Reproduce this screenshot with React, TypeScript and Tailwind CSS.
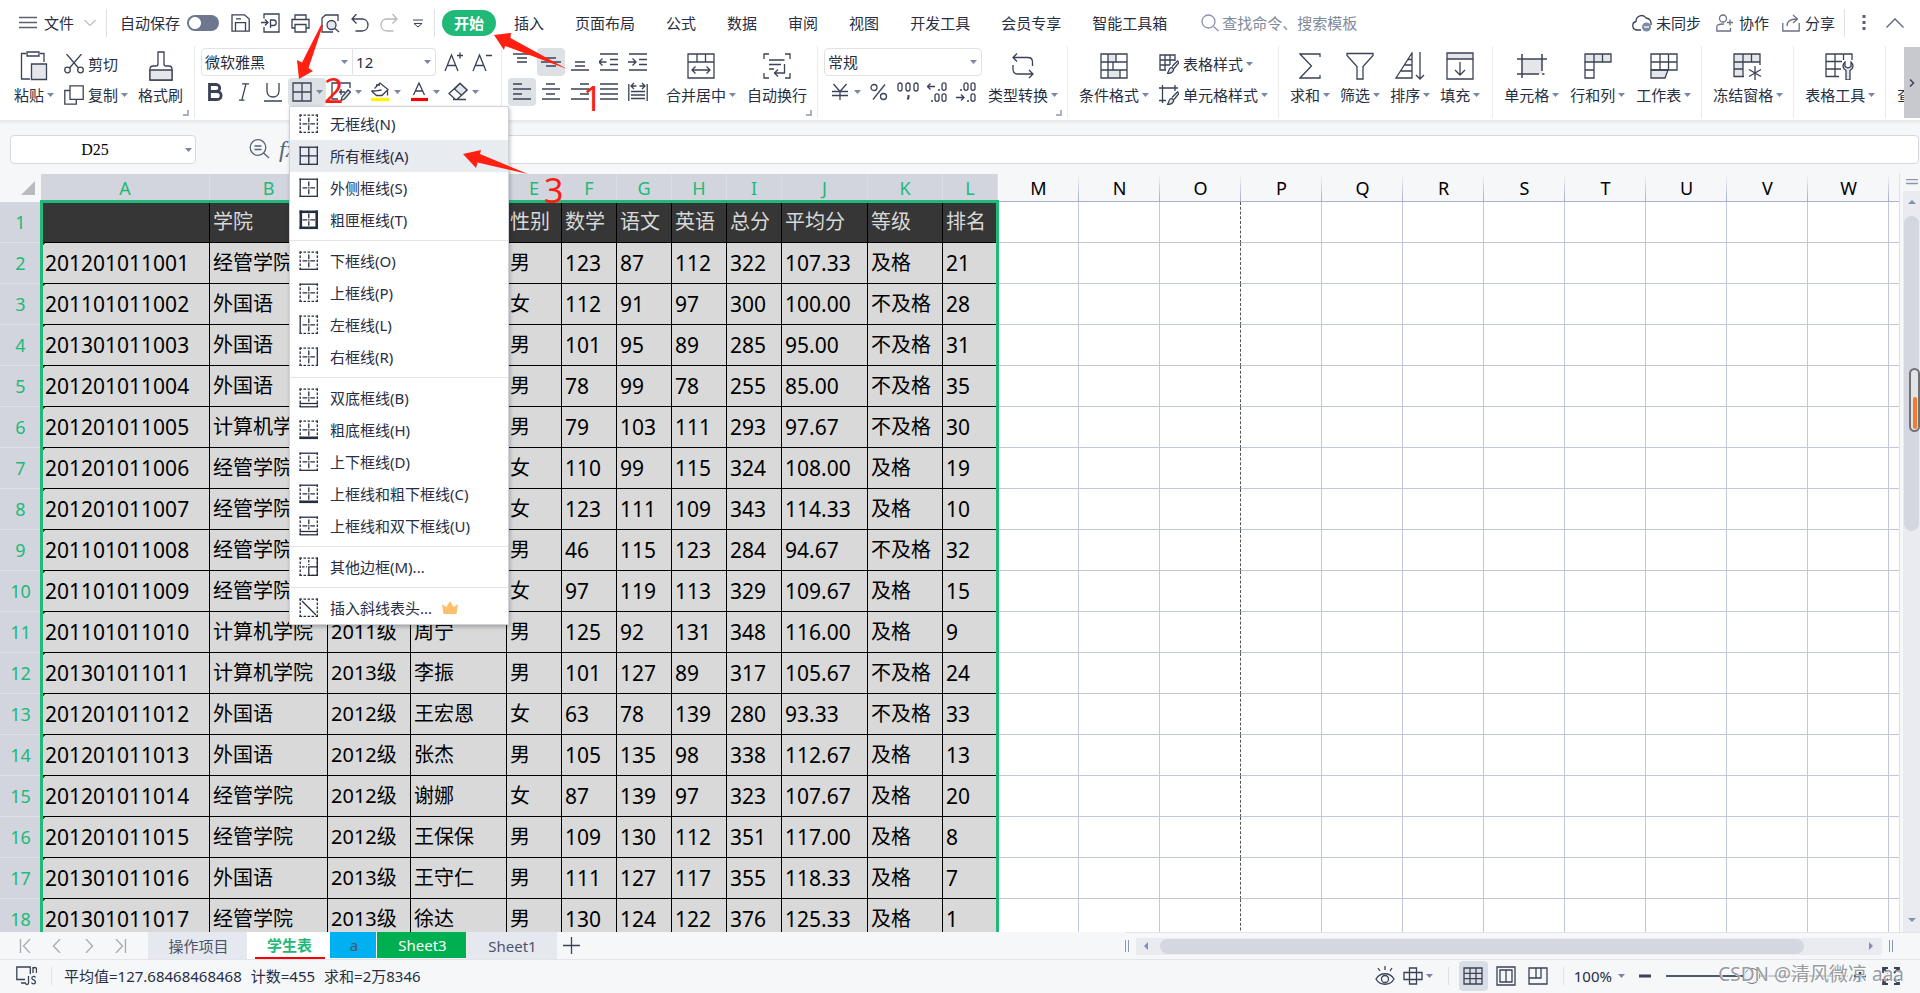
import type { ReactNode } from "react";

const INK = "#3a4256";

function Svg({ w, h, className = "", children }: { w: number; h: number; className?: string; children: ReactNode }) {
  return (
    <svg width={w} height={h} viewBox={`0 0 ${w} ${h}`} fill="none" stroke={INK} strokeWidth="1.3" className={`shrink-0 ${className}`} aria-hidden="true">
      {children}
    </svg>
  );
}

function Caret() {
  return (
    <svg width="7" height="4" viewBox="0 0 7 4" className="shrink-0" aria-hidden="true">
      <path d="M0 0h7L3.500 4z" fill="#7b86a3" />
    </svg>
  );
}

function Big({ label, icon, caret = true }: { label: string; icon: ReactNode; caret?: boolean }) {
  return (
    <button className="flex shrink-0 flex-col items-center">
      <span className="flex h-8 items-center">{icon}</span>
      <span className="flex h-[26px] items-center gap-[3px] whitespace-nowrap">
        {label}
        {caret && <Caret />}
      </span>
    </button>
  );
}

function Small({ label, icon, caret = true }: { label: string; icon: ReactNode; caret?: boolean }) {
  return (
    <button className="flex h-7 items-center gap-1 whitespace-nowrap">
      {icon}
      <span className="flex items-center gap-[3px]">
        {label}
        {caret && <Caret />}
      </span>
    </button>
  );
}

function Tool({ label, active = false, drop = false, children }: { label: string; active?: boolean; drop?: boolean; children: ReactNode }) {
  return (
    <button
      aria-label={label}
      className={`flex h-7 shrink-0 items-center rounded-sm ${drop ? "w-[38px] gap-1 pl-1" : "w-7 justify-center"} ${active ? "bg-[#dce1e6]" : ""}`}
    >
      {children}
      {drop && <Caret />}
    </button>
  );
}

function Group({ corner = false, className = "", children }: { corner?: boolean; className?: string; children: ReactNode }) {
  return (
    <div className={`relative flex h-[72px] shrink-0 border-r border-[#e9ebef] pt-1 ${className}`}>
      {children}
      {corner && (
        <svg width="6" height="6" viewBox="0 0 6 6" className="absolute right-[5px] bottom-0.5" aria-hidden="true">
          <path d="M5 0v5H0" fill="none" stroke="#a9b1c4" strokeWidth="2" />
        </svg>
      )}
    </div>
  );
}

function Pick({ label, value, className }: { label: string; value: string; className: string }) {
  return (
    <div className={`relative flex items-center border-[#dfe2e8] ${className}`}>
      <select aria-label={label} className="h-full w-full appearance-none bg-transparent pl-[3px] outline-none">
        <option>{value}</option>
      </select>
      <span className="pointer-events-none absolute right-1 flex">
        <Caret />
      </span>
    </div>
  );
}

function Lines({ rows }: { rows: [number, number, number][] }) {
  return (
    <Svg w={20} h={20}>
      <path d={rows.map(([x, y, n]) => `M${x} ${y}h${n}`).join("")} strokeWidth="1.6" />
    </Svg>
  );
}

/* ---------- title bar ---------- */

const tabs = ["插入", "页面布局", "公式", "数据", "审阅", "视图", "开发工具", "会员专享", "智能工具箱"];

function TitleBar() {
  return (
    <header className="flex h-[46px] shrink-0 items-center bg-white whitespace-nowrap">
      <button className="ml-[19px] flex items-center">
        <Svg w={18} h={14}>
          <path d="M0 1.500h18M0 6.500h18M0 11.500h18" stroke="#5b6170" />
        </Svg>
        <span className="ml-[7px]">文件</span>
        <Svg w={12} h={8} className="ml-[10px]">
          <path d="M.5 1L6 6.500 11.500 1" stroke="#8a8f9b" strokeWidth="1" />
        </Svg>
      </button>
      <span className="mr-[13px] ml-[10px] h-7 w-px bg-[#dfe1e6]" />
      <label htmlFor="autosave">自动保存</label>
      <input
        id="autosave"
        type="checkbox"
        className="ml-[7px] h-4 w-8 appearance-none rounded-full bg-[#6d7790] bg-[radial-gradient(circle_at_8px_8px,#fff_5.5px,transparent_6.5px)]"
      />
      <div className="ml-3 flex items-center gap-[11px]">
        <button aria-label="保存">
          <Svg w={19} h={18}>
            <path d="M1 .8h12.500L18.200 5v12.200H1zM4.500 17V8.700h10V17M5 4.800H10" />
          </Svg>
        </button>
        <button aria-label="输出为PDF">
          <Svg w={19} h={20}>
            <path d="M3 5.500V1h15v18H3v-5M0 9.500h6.500M4 6.500l3 3-3 3M9.500 15V7h3c3.600 0 3.600 5.500 0 5.500H9.500" />
          </Svg>
        </button>
        <button aria-label="打印">
          <Svg w={19} h={19}>
            <path d="M4 5.500V1h11v4.500M4 14H1V5.500h17V14h-3M4 10.500h11V18H4z" />
          </Svg>
        </button>
        <button aria-label="打印预览">
          <Svg w={19} h={19}>
            <path d="M12 18H1V4l3.500-3H17v6" />
            <circle cx="10.500" cy="11" r="4.500" fill="#e4e6ea" />
            <path d="M14 14.500l4 3.500" />
          </Svg>
        </button>
        <button aria-label="撤销">
          <Svg w={18} h={18}>
            <path d="M5.500 0L1 5 5.500 9.500M1.500 5h9.500c8 0 8 12 0 12H4.500" />
          </Svg>
        </button>
        <button aria-label="恢复">
          <Svg w={18} h={18}>
            <path d="M12.500 0L17 5 12.500 9.500M16.500 5H7c-8 0-8 12 0 12h6.500" stroke="#b5b8be" />
          </Svg>
        </button>
        <button aria-label="更多快捷工具" className="ml-1">
          <Svg w={10} h={9}>
            <path d="M0 1h10M1 4.500h8L5 8z" strokeWidth="1" />
          </Svg>
        </button>
      </div>
      <span className="ml-[11px] h-7 w-px bg-[#dfe1e6]" />
      <nav className="ml-[7px] flex items-center">
        <button className="h-[26px] w-[54px] rounded-full bg-[#21b978] font-bold text-white">开始</button>
        <div className="ml-[18px] flex items-center gap-[31px]">
          {tabs.map((t) => (
            <button key={t}>{t}</button>
          ))}
        </div>
      </nav>
      <label className="ml-[34px] flex items-center gap-[3px]">
        <Svg w={18} h={18}>
          <circle cx="7.500" cy="7.500" r="6.500" stroke="#8a93ab" />
          <path d="M12.500 12.500l5 4.500" stroke="#8a93ab" />
        </Svg>
        <input aria-label="搜索" placeholder="查找命令、搜索模板" className="w-40 bg-transparent outline-none placeholder:text-[#7f889d]" />
      </label>
      <div className="ml-auto flex items-center">
        <button className="flex items-center gap-1">
          <Svg w={20} h={18}>
            <path d="M9 16H5.500C-.5 16-.5 8.500 4 7.500 4 1.500 11-.5 14 4c4 .5 5.500 3.500 5 7" />
            <circle cx="14.500" cy="13" r="4.500" fill="#7d8aa8" stroke="none" />
            <path d="M12 13h5" stroke="#fff" />
          </Svg>
          未同步
        </button>
        <button className="ml-[15px] flex items-center gap-1.5">
          <Svg w={17} h={18}>
            <circle cx="7" cy="4.500" r="3.500" stroke="#6a7285" />
            <path d="M14.500 14v3H.8v-3.500c0-3 2-3.500 7.200-3.500M14 5.500v6M11 8.500h6" stroke="#6a7285" />
          </Svg>
          协作
        </button>
        <button className="ml-[13px] flex items-center gap-[5px]">
          <Svg w={18} h={18}>
            <path d="M.8 9v8h16.400V9M5 12c0-4.500 3-7 9.500-7M11 1l4.500 4L11 9" stroke="#6a7285" />
          </Svg>
          分享
        </button>
        <span className="ml-[9px] h-7 w-px bg-[#dfe1e6]" />
        <button aria-label="更多" className="ml-[17px]">
          <Svg w={4} h={16}>
            <path d="M.5 1.500h3M.5 7.500h3M.5 13.500h3" strokeWidth="3" stroke="#5b6170" />
          </Svg>
        </button>
        <button aria-label="收起功能区" className="mr-4 ml-5">
          <Svg w={18} h={10}>
            <path d="M.5 9.500L9 1l8.500 8.500" stroke="#5b6170" />
          </Svg>
        </button>
      </div>
    </header>
  );
}

/* ---------- ribbon ---------- */

const brush = (
  <>
    <path d="M13 12.500l5.500-5.500 1.500 1.500-5 6" />
    <path d="M8 19.300c2 0 1-4 3.500-5.500 2-.5 3.500 1 3 2.500-.8 2.500-4 3.500-6.500 3z" fill="#e4e6ea" />
  </>
);

function Ribbon() {
  return (
    <section className="flex h-[74px] shrink-0 overflow-hidden bg-white">
      <div className="flex min-w-0 flex-1 overflow-hidden">
        <Group corner className="gap-[10px] pr-[11px] pl-[14px]">
          <Big
            label="粘贴"
            icon={
              <Svg w={28} h={30}>
                <path d="M6 2.500H1.500V28H10M20 2.500h4V11M7 1h12v4H7z" />
                <path d="M11.500 13h15v15.500h-15z" fill="#e4e6ea" />
              </Svg>
            }
          />
          <div className="flex flex-col gap-[3px]">
            <Small
              label="剪切"
              caret={false}
              icon={
                <Svg w={20} h={20}>
                  <path d="M2.500 0L14.500 14M17.500 0L5.500 14" />
                  <circle cx="3.500" cy="16" r="2.800" />
                  <circle cx="16.500" cy="16" r="2.800" />
                </Svg>
              }
            />
            <Small
              label="复制"
              icon={
                <Svg w={20} h={20}>
                  <path d="M6 5.500H.8v13.700h11.500V14.500M6 .8h13.200v13.500H6z" />
                </Svg>
              }
            />
          </div>
          <Big
            label="格式刷"
            caret={false}
            icon={
              <Svg w={24} h={30}>
                <path d="M1 29V18.500c0-2.500 1-3.500 3-3.500h3c1.500 0 2-1 2-2V1h6v12c0 1 .5 2 2 2h3c2 0 3 1 3 3.500V29z" />
                <path d="M1 19h22v10H1z" fill="#e4e6ea" />
              </Svg>
            }
          />
        </Group>

        <Group className="w-[307px] pl-1.5">
          <div className="-mt-0.5 flex flex-col gap-0.5">
            <div className="flex h-7 items-center">
              <Pick label="字体" value="微软雅黑" className="h-7 w-[152px] rounded-l-sm border" />
              <Pick label="字号" value="12" className="h-7 w-[83px] rounded-r-sm border border-l-0" />
              <div className="ml-1 flex">
                <Tool label="增大字号">
                  <Svg w={20} h={20}>
                    <path d="M1 19L7.500 3 14 19M3.500 13.500h8M13 3.500h6M16 .5v6" />
                  </Svg>
                </Tool>
                <Tool label="减小字号">
                  <Svg w={20} h={20}>
                    <path d="M1 19L7.500 3 14 19M3.500 13.500h8M14 3.500h6" />
                  </Svg>
                </Tool>
              </div>
            </div>
            <div className="flex gap-px">
              <Tool label="加粗">
                <Svg w={16} h={18}>
                  <path d="M2.500 1.500H9c5 0 5 7 0 7H2.500zM2.500 8.500H10c5.500 0 5.500 8 0 8H2.500z" strokeWidth="2.800" />
                </Svg>
              </Tool>
              <Tool label="倾斜">
                <Svg w={12} h={18}>
                  <path d="M4 .8h7M1 17.200h5.500M8 .8L3.800 17.200" />
                </Svg>
              </Tool>
              <Tool label="下划线">
                <Svg w={18} h={19}>
                  <path d="M3 0v8c0 8 12 8 12 0V0M0 18h18" />
                </Svg>
              </Tool>
              <Tool label="边框" active drop>
                <Svg w={20} h={20}>
                  <path d="M1 1h18v18H1zM1 10h18M10 1v18" />
                </Svg>
              </Tool>
              <Tool label="绘图边框" drop>
                <Svg w={20} h={20}>
                  <path d="M7 17H1V1h18v5M8 10h6M10 7v6" />
                  <path d="M10 18.500l1-3.500 6-7 2.500 2-6 7z" fill="#e4e6ea" />
                </Svg>
              </Tool>
              <Tool label="填充颜色" drop>
                <Svg w={20} h={20}>
                  <path d="M4.500 6.500L10 1l8 6.500L12 13.500H6.500L1.500 9M1.500 8.500c4 1.500 6-.5 10-.5M6 3h4" />
                  <path d="M17.500 8.500v5" />
                  <path d="M1 17.500h18" stroke="#fff500" strokeWidth="3.400" />
                </Svg>
              </Tool>
              <Tool label="字体颜色" drop>
                <Svg w={20} h={20}>
                  <path d="M4.500 13L10 1l5.500 12M6.500 9h7" />
                  <path d="M2 17.500h17" stroke="#f60000" strokeWidth="3.200" />
                </Svg>
              </Tool>
              <Tool label="清除" drop>
                <Svg w={20} h={20}>
                  <path d="M5 17.500h13M7.500 17.500L1 11.500 12 1.500l7 6.500L9 17.500z" />
                  <path d="M6.500 7L12 1.500l7 6.500-5.500 5.200z" fill="#e4e6ea" />
                </Svg>
              </Tool>
            </div>
          </div>
        </Group>

        <Group corner className="w-[316px] pl-1.5">
          <div className="-mt-0.5 flex flex-col gap-0.5">
            <div className="flex gap-px">
              <Tool label="顶端对齐"><Lines rows={[[1, 2, 18], [5, 6, 10], [5, 10, 10]]} /></Tool>
              <Tool label="垂直居中" active><Lines rows={[[5, 6, 10], [0, 10, 20], [5, 14, 10]]} /></Tool>
              <Tool label="底端对齐"><Lines rows={[[5, 10, 10], [5, 14, 10], [1, 18, 18]]} /></Tool>
              <Tool label="减少缩进量">
                <Svg w={20} h={20}>
                  <path d="M1 2h18M11 7.500h8M11 12.500h8M1 18h18M0 10h7.500M3.500 6.500L0 10l3.500 3.500" />
                </Svg>
              </Tool>
              <Tool label="增加缩进量">
                <Svg w={20} h={20}>
                  <path d="M1 2h18M11 7.500h8M11 12.500h8M1 18h18M0 10h7.500M4.500 6.500L8 10l-3.500 3.500" />
                </Svg>
              </Tool>
            </div>
            <div className="flex gap-px">
              <Tool label="左对齐" active><Lines rows={[[1, 2, 9], [1, 7, 18], [1, 12, 9], [1, 17, 18]]} /></Tool>
              <Tool label="水平居中"><Lines rows={[[5, 2, 9], [1, 7, 18], [5, 12, 9], [1, 17, 18]]} /></Tool>
              <Tool label="右对齐"><Lines rows={[[10, 2, 9], [1, 7, 18], [10, 12, 9], [1, 17, 18]]} /></Tool>
              <Tool label="两端对齐"><Lines rows={[[1, 2, 18], [1, 7, 18], [1, 12, 18], [1, 17, 18]]} /></Tool>
              <Tool label="分散对齐">
                <Svg w={20} h={20}>
                  <path d="M.8 2v17M19.200 2v17M3 9.500h14M3 13h14M3 16.500h14M3.500 4h5M11.500 4h5M6 1L3 4l3 3M14 1l3 3-3 3" />
                </Svg>
              </Tool>
            </div>
          </div>
          <div className="ml-[14px] flex gap-[11px]">
            <Big
              label="合并居中"
              icon={
                <Svg w={28} h={26}>
                  <path d="M1 1h26v24H1zM1 9h26M10 1v8M18.500 1v8M5 17h18M8.500 13.500L5 17l3.500 3.500M19.500 13.500L23 17l-3.500 3.500" />
                </Svg>
              }
            />
            <Big
              label="自动换行"
              caret={false}
              icon={
                <Svg w={28} h={26}>
                  <path d="M6 1H1v5M22 1h5v5M6 25H1v-5M22 25h5v-5M6 7h15.500M6 11.500h12M6 16h5M21.500 11v9H11M15 16.500L11.500 20l3.500 3.500" />
                </Svg>
              }
            />
          </div>
        </Group>

        <Group corner className="gap-1.5 pr-[9px] pl-1.5">
          <div className="-mt-0.5 flex flex-col gap-0.5">
            <Pick label="数字格式" value="常规" className="h-7 w-[158px] rounded-sm border" />
            <div className="flex gap-px pl-0.5">
              <Tool label="中文货币符号" drop>
                <Svg w={20} h={20}>
                  <path d="M3.500 2L10 9.500 16.500 2M10 9.500V18M2 9.500h16M2 13.500h16" />
                </Svg>
              </Tool>
              <Tool label="百分比样式">
                <Svg w={18} h={18}>
                  <circle cx="4" cy="4.500" r="3" />
                  <circle cx="13.500" cy="13.500" r="3" />
                  <path d="M15 1.500L3 16.500" />
                </Svg>
              </Tool>
              <Tool label="千位分隔样式">
                <Svg w={22} h={20}>
                  <rect x="1" y="1" width="4" height="8" rx="2" />
                  <rect x="9" y="1" width="4" height="8" rx="2" />
                  <rect x="17" y="1" width="4" height="8" rx="2" />
                  <path d="M11.500 13v2.500l-1 2" strokeWidth="2" />
                </Svg>
              </Tool>
              <Tool label="增加小数位数">
                <Svg w={20} h={20}>
                  <rect x="15" y="0.800" width="4" height="7.500" rx="2" />
                  <rect x="8" y="11.800" width="4" height="7.500" rx="2" />
                  <rect x="15" y="11.800" width="4" height="7.500" rx="2" />
                  <path d="M.5 4.500H8M3.500 1.500l-3 3 3 3M11 8h2M4 19h2" />
                </Svg>
              </Tool>
              <Tool label="减少小数位数">
                <Svg w={20} h={20}>
                  <rect x="8" y="0.800" width="4" height="7.500" rx="2" />
                  <rect x="15" y="0.800" width="4" height="7.500" rx="2" />
                  <rect x="15" y="11.800" width="4" height="7.500" rx="2" />
                  <path d="M0 15.500h8M5 12.500l3 3-3 3M4 8h2M11 19h2" />
                </Svg>
              </Tool>
            </div>
          </div>
          <Big
            label="类型转换"
            icon={
              <Svg w={24} h={26}>
                <path d="M6 .5L2 4.500l4 4M2.500 4.500H17c3 0 4.500 1.500 4.500 4.500v4M2 12v4c0 3 1.500 5 4.500 5H22M18 17l4 4-4 4" />
              </Svg>
            }
          />
        </Group>

        <Group className="gap-[10px] pr-[10px] pl-[11px]">
          <Big
            label="条件格式"
            icon={
              <Svg w={28} h={26}>
                <path d="M8 1h8v8H8zM8 17h12v8H8z" fill="#e4e6ea" stroke="none" />
                <path d="M1 1h26v24H1zM1 9h26M1 17h26M8 1v24M16 1v8M13 9v8M20 17v8" />
              </Svg>
            }
          />
          <div className="flex flex-col gap-[3px]">
            <Small
              label="表格样式"
              icon={
                <Svg w={20} h={20}>
                  <path d="M7 16H1V1h15v6M1 6h15M1 11h10M6 1v15M11 1v10" />
                  {brush}
                </Svg>
              }
            />
            <Small
              label="单元格样式"
              icon={
                <Svg w={20} h={20}>
                  <path d="M0 3h19M3.500 0v18M0 15.500h7M16 0v6" />
                  {brush}
                </Svg>
              }
            />
          </div>
        </Group>

        <Group className="gap-[10px] pr-3 pl-[11px]">
          <Big
            label="求和"
            icon={
              <Svg w={22} h={26}>
                <path d="M21 4V1H1l11.500 12L1 25h20v-3" />
              </Svg>
            }
          />
          <Big
            label="筛选"
            icon={
              <Svg w={28} h={28}>
                <path d="M1 1.500h26v2l-10 11V27h-6V14.500L1 3.500z" />
              </Svg>
            }
          />
          <Big
            label="排序"
            icon={
              <Svg w={30} h={28}>
                <path d="M1 26L17 1v25zM13 7.500h4M9.500 13h7.500M5.500 19h11.500M25 0v27M21 23l4 4 4-4" />
              </Svg>
            }
          />
          <Big
            label="填充"
            icon={
              <Svg w={28} h={28}>
                <path d="M1 1h26v6H1z" fill="#e4e6ea" />
                <path d="M1 7v20h26V7M14 10v13M9 18l5 5 5-5" />
              </Svg>
            }
          />
        </Group>

        <Group className="gap-[11px] pr-[10px] pl-[11px]">
          <Big
            label="单元格"
            icon={
              <Svg w={30} h={24}>
                <path d="M5 5h20v15H5z" fill="#e4e6ea" stroke="none" />
                <path d="M0 5h30M5 0v24M25 0v17M0 20h22M25 20h2.500" strokeWidth="1.500" />
              </Svg>
            }
          />
          <Big
            label="行和列"
            icon={
              <Svg w={28} h={26}>
                <path d="M1 1h26v8H1z" fill="#e4e6ea" />
                <path d="M1 9v16h9V1M18.500 1v8M1 17h9" />
              </Svg>
            }
          />
          <Big
            label="工作表"
            icon={
              <Svg w={28} h={26}>
                <path d="M1 17h17l-3 8H1z" fill="#e4e6ea" />
                <path d="M1 17V1h26v16H1M1 9h26M10 1v16M18.500 1v16" />
              </Svg>
            }
          />
        </Group>

        <Group className="pr-[10px] pl-[11px]">
          <Big
            label="冻结窗格"
            icon={
              <Svg w={30} h={28}>
                <path d="M1 2h26v8H10v15H1z" fill="#e4e6ea" stroke="none" />
                <path d="M11 24.500H1V2h26v11M1 10h26M1 17h9M10 2v22.500M18.500 2v8M22 14v14M16 17.500l12 7M28 17.500l-12 7" />
              </Svg>
            }
          />
        </Group>
        <Group className="pr-[10px] pl-[11px]">
          <Big
            label="表格工具"
            icon={
              <Svg w={30} h={28}>
                <path d="M14 24.500H1V2h26v6M1 9.500h16M1 17h15M10 2v22.500M18.500 2v6" />
                <path d="M20 10c-3 3-2.500 6.500 1 8.500V28h4v-9.500c3.500-2 4-5.500 1-8.500v4.500l-3 1.500-3-1.500z" fill="#e4e6ea" />
              </Svg>
            }
          />
        </Group>
        <div className="flex shrink-0 pt-1 pl-[11px]">
          <Big label="查找" icon={null} />
        </div>
      </div>
      <button aria-label="向右滚动" className="mt-px flex h-[71px] w-4 shrink-0 items-center justify-center bg-[#c7c9cf]">
        <Svg w={6} h={8}>
          <path d="M1 .5L4.500 4 1 7.500" strokeWidth="1.500" />
        </Svg>
      </button>
    </section>
  );
}

/* ---------- formula bar ---------- */

function FormulaBar() {
  return (
    <section className="flex h-[54px] shrink-0 items-start bg-[linear-gradient(#e6e7e9,#f5f7f9_5px)] pt-[15px] pr-px pl-[10px]">
      <div className="relative flex h-[29px] w-[186px] items-center rounded-sm border border-[#d5d8df] bg-white">
        <input aria-label="名称框" defaultValue="D25" className="w-[168px] bg-transparent text-center font-[Liberation_Serif,serif] text-base text-black outline-none" />
        <span className="absolute right-[3px]">
          <Caret />
        </span>
      </div>
      <div className="ml-[53px] flex h-7 w-[75px] items-center gap-[9px]">
        <Svg w={21} h={20}>
          <circle cx="9" cy="8.500" r="7.800" stroke="#59627a" />
          <path d="M5.500 7h7M5.500 10.500h7M14.500 14l5.500 5" stroke="#59627a" />
        </Svg>
        <button className="font-[Liberation_Serif,serif] text-2xl leading-5 text-[#59627a] italic">fx</button>
      </div>
      <input aria-label="编辑栏" className="h-[29px] min-w-0 flex-1 rounded-sm border border-[#d5d8df] bg-white px-2 outline-none" />
    </section>
  );
}

/* ---------- sheet ---------- */

const columns: [string, string][] = [
  ["A", "w-[169px]"], ["B", "w-[118px]"], ["C", "w-[83px]"], ["D", "w-[96px]"], ["E", "w-[55px]"], ["F", "w-[55px]"],
  ["G", "w-[55px]"], ["H", "w-[55px]"], ["I", "w-[55px]"], ["J", "w-[86px]"], ["K", "w-[75px]"], ["L", "w-[55px]"],
];
const blanks = ["M", "N", "O", "P", "Q", "R", "S", "T", "U", "V", "W"];

const rows: string[][] = [
  ["", "学院", "", "", "性别", "数学", "语文", "英语", "总分", "平均分", "等级", "排名"],
  ["201201011001", "经管学院", "", "", "男", "123", "87", "112", "322", "107.33", "及格", "21"],
  ["201101011002", "外国语", "", "", "女", "112", "91", "97", "300", "100.00", "不及格", "28"],
  ["201301011003", "外国语", "", "", "男", "101", "95", "89", "285", "95.00", "不及格", "31"],
  ["201201011004", "外国语", "", "", "男", "78", "99", "78", "255", "85.00", "不及格", "35"],
  ["201201011005", "计算机学院", "", "", "男", "79", "103", "111", "293", "97.67", "不及格", "30"],
  ["201201011006", "经管学院", "", "", "女", "110", "99", "115", "324", "108.00", "及格", "19"],
  ["201201011007", "经管学院", "", "", "女", "123", "111", "109", "343", "114.33", "及格", "10"],
  ["201101011008", "经管学院", "", "", "男", "46", "115", "123", "284", "94.67", "不及格", "32"],
  ["201101011009", "经管学院", "", "", "女", "97", "119", "113", "329", "109.67", "及格", "15"],
  ["201101011010", "计算机学院", "2011级", "周宁", "男", "125", "92", "131", "348", "116.00", "及格", "9"],
  ["201301011011", "计算机学院", "2013级", "李振", "男", "101", "127", "89", "317", "105.67", "不及格", "24"],
  ["201201011012", "外国语", "2012级", "王宏恩", "女", "63", "78", "139", "280", "93.33", "不及格", "33"],
  ["201201011013", "外国语", "2012级", "张杰", "男", "105", "135", "98", "338", "112.67", "及格", "13"],
  ["201201011014", "经管学院", "2012级", "谢娜", "女", "87", "139", "97", "323", "107.67", "及格", "20"],
  ["201201011015", "经管学院", "2012级", "王保保", "男", "109", "130", "112", "351", "117.00", "及格", "8"],
  ["201301011016", "外国语", "2013级", "王守仁", "男", "111", "127", "117", "355", "118.33", "及格", "7"],
  ["201301011017", "经管学院", "2013级", "徐达", "男", "130", "124", "122", "376", "125.33", "及格", "1"],
];

function Sheet() {
  return (
    <main className="flex min-h-0 flex-1">
      <div className="relative min-w-0 flex-1 overflow-hidden bg-white">
        <table className="w-full table-fixed border-separate border-spacing-0 leading-none text-black">
          <colgroup>
            <col className="w-[41px]" />
            {columns.map(([c, w]) => (
              <col key={c} className={w} />
            ))}
            {blanks.map((c) => (
              <col key={c} className="w-[81px]" />
            ))}
            <col />
          </colgroup>
          <thead>
            <tr className="h-7 text-lg leading-none">
              <th className="bg-[#f5f7f9] p-0">
                <svg width="14" height="14" viewBox="0 0 14 14" className="ml-[21px] block" aria-hidden="true">
                  <path d="M14 0v14H0z" fill="#b9bbbf" />
                </svg>
              </th>
              {columns.map(([c]) => (
                <th key={c} scope="col" className="border-r border-b border-r-[#d9dde6] border-b-[#a9b1c9] bg-[#d2d5dd] p-0 font-normal text-[#21b978]">
                  {c}
                </th>
              ))}
              {blanks.map((c) => (
                <th
                  key={c}
                  scope="col"
                  className="border-b border-[#a9b1c9] bg-[#f5f7f9] bg-[linear-gradient(#f5f7f9,#a5aec6)] bg-[size:1px_100%] bg-[position:right_top] bg-no-repeat p-0 font-normal"
                >
                  {c}
                </th>
              ))}
              <th className="border-b border-[#a9b1c9] bg-[#f5f7f9] p-0" />
            </tr>
          </thead>
          <tbody>
            {rows.map((r, i) => (
              <tr key={i} className="h-[41px]">
                <th scope="row" className="border-b border-[#dde0e8] bg-[#d2d5dd] p-0 text-lg leading-none font-normal text-[#21b978]">
                  {i + 1}
                </th>
                {r.map((v, j) => (
                  <td
                    key={j}
                    className={`overflow-hidden border-r border-b border-black p-0 whitespace-nowrap ${j === 0 ? "pl-1" : "pl-[3px]"} ${
                      i === 0 ? "bg-[#363636] text-[#d9d9d9]" : "bg-[#d9d9d9]"
                    } ${/^[\d.]+$/.test(v) ? "text-[21px] leading-none" : "text-xl leading-none"} ${
                      j === 0 && i > 0 ? "bg-[linear-gradient(135deg,#0b7a12_3px,transparent_3px)]" : ""
                    }`}
                  >
                    {v}
                  </td>
                ))}
                {blanks.map((c) => (
                  <td key={c} className={`border-r border-b border-b-[#c0c7da] p-0 ${c === "O" ? "border-r-[#555] border-dashed [border-bottom-style:solid]" : "border-r-[#c0c7da]"}`} />
                ))}
                <td className="border-b border-[#c0c7da] p-0" />
              </tr>
            ))}
          </tbody>
        </table>
        <div className="pointer-events-none absolute top-[26px] left-10 h-[800px] w-[959px] border-3 border-[#21b978]" />
      </div>

      <aside className="relative flex w-[21px] shrink-0 flex-col border-l border-[#dcdfe6] bg-[#f5f7f9] pl-[3px]">
        <div className="flex h-[17px] shrink-0 items-end justify-center pb-1.5">
          <Svg w={12} h={6}>
            <path d="M0 .5h12M0 4.500h12" stroke="#8c97b2" />
          </Svg>
        </div>
        <div className="flex flex-1 flex-col items-center bg-[#e9ebf0]">
          <svg width="8" height="4" viewBox="0 0 8 4" className="mt-[9px] shrink-0" aria-hidden="true">
            <path d="M0 4h8L4 0z" fill="#8390b0" />
          </svg>
          <div className="mt-3 h-[315px] w-[15px] shrink-0 rounded-full bg-[#d4d7df]" />
          <svg width="8" height="4" viewBox="0 0 8 4" className="mt-auto mb-[10px] shrink-0" aria-hidden="true">
            <path d="M0 0h8L4 4z" fill="#8390b0" />
          </svg>
        </div>
        <div className="absolute top-[194px] right-0 flex h-16 w-[11px] items-end justify-center rounded-full border-2 border-[#6f7175] bg-[#e3e4e6] pb-px">
          <div className="h-8 w-1 rounded-full bg-[#f47a2c]" />
        </div>
      </aside>
    </main>
  );
}

/* ---------- border menu ---------- */

type Edge = "solid" | "thick" | "double" | undefined;
type Glyph = { t?: Edge; b?: Edge; l?: Edge; r?: Edge; mid?: "solid" | "corner" | "diag" };

function BorderGlyph({ t, b, l, r, mid }: Glyph) {
  const dash = "2.5 1.500";
  const edge = (e: Edge, d: string) => <path d={d} strokeDasharray={e ? undefined : dash} strokeWidth={e === "thick" ? 2.6 : 1.3} />;
  const low = b === "double" ? 15.5 : b === "thick" ? 17.8 : 18.3;
  return (
    <svg width="20" height="20" viewBox="0 0 20 20" fill="none" stroke="#272e42" strokeWidth="1.300" className="shrink-0" aria-hidden="true">
      {edge(t, t === "thick" ? "M.5 1.800h18.500" : "M.5 1.200h18.500")}
      {edge(b, `M.5 ${low}h18.500`)}
      {b === "double" && <path d="M.5 18.800h18.500" />}
      {edge(l, l === "thick" ? "M1.800 .5v18.500" : "M1.200 .5v18.500")}
      {edge(r, r === "thick" ? "M17.700 .5v18.500" : "M18.300 .5v18.500")}
      {!mid && <path d={`M9.800 3.500V8.300M9.800 11.300V${low - 2}M3.500 9.800H8.300M11.300 9.800H16M9 9.800h1.600`} />}
      {mid === "solid" && <path d="M9.800 1v18M1 9.800h18" />}
      {mid === "corner" && (
        <>
          <path d="M9.800 3v5M3 9.800h5" strokeDasharray={dash} />
          <path d="M9.800 19V9.800H19M9.800 18.300h9M18.300 1v18" />
        </>
      )}
      {mid === "diag" && <path d="M3 3l14 14" />}
    </svg>
  );
}

const menu: { label: string; g: Glyph; active?: boolean; vip?: boolean }[][] = [
  [
    { label: "无框线(N)", g: {} },
    { label: "所有框线(A)", g: { t: "solid", b: "solid", l: "solid", r: "solid", mid: "solid" }, active: true },
    { label: "外侧框线(S)", g: { t: "solid", b: "solid", l: "solid", r: "solid" } },
    { label: "粗匣框线(T)", g: { t: "thick", b: "thick", l: "thick", r: "thick" } },
  ],
  [
    { label: "下框线(O)", g: { b: "solid" } },
    { label: "上框线(P)", g: { t: "solid" } },
    { label: "左框线(L)", g: { l: "solid" } },
    { label: "右框线(R)", g: { r: "solid" } },
  ],
  [
    { label: "双底框线(B)", g: { b: "double" } },
    { label: "粗底框线(H)", g: { b: "thick" } },
    { label: "上下框线(D)", g: { t: "solid", b: "solid" } },
    { label: "上框线和粗下框线(C)", g: { t: "solid", b: "thick" } },
    { label: "上框线和双下框线(U)", g: { t: "solid", b: "double" } },
  ],
  [{ label: "其他边框(M)...", g: { mid: "corner" } }],
  [{ label: "插入斜线表头...", g: { mid: "diag" }, vip: true }],
];

function BorderMenu() {
  return (
    <div role="menu" className="absolute top-[106px] left-[289px] w-[220px] border border-[#cfd2d8] bg-white pt-px shadow-[1px_2px_4px_rgba(0,0,0,0.25)]">
      {menu.map((items, i) => (
        <div key={i} className={i ? "mt-1 border-t border-[#e2e4e8] pt-1" : ""}>
          {items.map(({ label, g, active, vip }) => (
            <button key={label} role="menuitem" className={`flex h-8 w-full items-center pl-[9px] ${active ? "bg-[#e8ebf0]" : ""}`}>
              <BorderGlyph {...g} />
              <span className="ml-[11px]">{label}</span>
              {vip && (
                <svg width="16" height="13" viewBox="0 0 16 13" className="mb-0.5 ml-[10px]" aria-hidden="true">
                  <path d="M0 3l4.500 3L8 0l3.500 6L16 3l-1.500 10h-13z" fill="#fdbf6b" />
                </svg>
              )}
            </button>
          ))}
        </div>
      ))}
    </div>
  );
}

/* ---------- sheet tabs and status bar ---------- */

function SheetTabs() {
  const nav: [string, string][] = [
    ["第一张", "M1.500 0v14M11 0L4.500 7l6.500 7"],
    ["上一张", "M9 0L2.500 7 9 14"],
    ["下一张", "M3 0l6.500 7L3 14"],
    ["最后一张", "M10.500 0v14M1 0l6.500 7L1 14"],
  ];
  return (
    <div className="flex h-[27px] shrink-0 items-stretch bg-[#f5f7f9] text-[#4b5468]">
      <div className="flex w-[148px] items-center gap-5 pl-[19px]">
        {nav.map(([label, d]) => (
          <button key={label} aria-label={label}>
            <Svg w={12} h={14}>
              <path d={d} stroke="#a6a9b0" />
            </Svg>
          </button>
        ))}
      </div>
      <button className="w-[99px] bg-[#e6e8ef] pl-0.5">操作项目</button>
      <button className="flex w-[83px] flex-col items-center justify-end bg-white pl-0.5 font-bold text-[#21b978]">
        <span className="leading-6">学生表</span>
        <span className="h-0.5 w-[70px] bg-[#fb0000]" />
      </button>
      <button className="mb-px w-[47px] border-r border-white bg-[#00b0f0] pl-0.5">a</button>
      <button className="mb-px w-[89px] bg-[#00b050] pl-0.5 text-white">Sheet3</button>
      <button className="w-[91px] bg-[#e6e8ef] pl-0.5">Sheet1</button>
      <button aria-label="新建工作表" className="ml-1.5">
        <Svg w={17} h={17}>
          <path d="M8.500 0v17M0 8.500h17" />
        </Svg>
      </button>
      <div className="ml-auto flex w-[795px] items-center gap-[7px] border-t border-[#e2e4ea]">
        <Svg w={4} h={12}>
          <path d="M.5 0v12M3.500 0v12" stroke="#8c97b2" strokeWidth="1" />
        </Svg>
        <div className="flex h-[17px] w-[746px] items-center bg-[#e9ebf0] pr-[9px] pl-2">
          <svg width="4" height="8" viewBox="0 0 4 8" aria-hidden="true">
            <path d="M4 0v8L0 4z" fill="#8390b0" />
          </svg>
          <div className="ml-3 h-[15px] w-[644px] rounded-full bg-[#d4d7df]" />
          <svg width="4" height="8" viewBox="0 0 4 8" className="ml-auto" aria-hidden="true">
            <path d="M0 0v8l4-4z" fill="#8390b0" />
          </svg>
        </div>
        <Svg w={4} h={12}>
          <path d="M.5 0v12M3.500 0v12" stroke="#8c97b2" strokeWidth="1" />
        </Svg>
      </div>
    </div>
  );
}

function StatusBar() {
  return (
    <footer className="relative flex h-[34px] shrink-0 items-center border-t border-[#e2e4ea] bg-[#f5f7f9] pb-0.5 text-[#272e42]">
      <Svg w={21} h={20} className="ml-4">
        <path d="M9 13.500H.8V1h13.500v7M5 17h5M17 1v6M20.500 7V3c0-2-3.500-2-3.500 0M12.500 10v7c0 2-3 2-3 0M19.500 11.500c-1.500-2-4-1-3.500 1 .5 1.500 3.500 1.500 3.500 3.500s-3 2.500-4 .5" />
      </Svg>
      <span className="ml-[14px] h-[18px] w-px bg-[#dfe1e6]" />
      <div className="ml-3 flex gap-[9px]">
        <span>平均值=127.68468468468</span>
        <span>计数=455</span>
        <span>求和=2万8346</span>
      </div>
      <div className="mr-5 ml-auto flex items-center">
        <button aria-label="护眼模式">
          <Svg w={20} h={20}>
            <path d="M1 13c4-7 14-7 18 0-4 7-14 7-18 0zM10 0v4M3 2l2 3M17 2l-2 3" />
            <circle cx="10" cy="13" r="3.500" />
          </Svg>
        </button>
        <button aria-label="阅读模式" className="ml-2 flex items-center gap-[3px]">
          <Svg w={20} h={18}>
            <path d="M6.500 1h7v16h-7zM1 5.500h18v7H1z" />
          </Svg>
          <Caret />
        </button>
        <span className="mr-[10px] ml-[15px] h-[18px] w-px bg-[#dfe1e6]" />
        <button aria-label="普通视图" className="flex h-[30px] w-[29px] items-center justify-center rounded-sm bg-[#d9dde5]">
          <Svg w={20} h={18}>
            <path d="M1 1h18v16H1zM1 6.300h18M1 11.600h18M7 1v16M13 1v16" />
          </Svg>
        </button>
        <button aria-label="分页预览" className="ml-2">
          <Svg w={20} h={20}>
            <path d="M1 1h18v18H1zM4 4h12v12H4zM10 4v12" />
          </Svg>
        </button>
        <button aria-label="页面布局视图" className="ml-3">
          <Svg w={20} h={18}>
            <path d="M1 1h18v16H1zM8 1v10h5V1M1 11h7" />
          </Svg>
        </button>
        <span className="mr-[10px] ml-[15px] h-[18px] w-px bg-[#dfe1e6]" />
        <button className="flex items-center gap-1.5">
          100%
          <Caret />
        </button>
        <button aria-label="缩小" className="ml-[14px]">
          <Svg w={12} h={12}>
            <path d="M0 6h12" strokeWidth="3" />
          </Svg>
        </button>
        <input
          aria-label="显示比例"
          type="range"
          defaultValue={47}
          className="ml-[15px] h-0.5 w-[182px] appearance-none bg-[linear-gradient(90deg,#4a5a70_47%,#c9ccd2_47%)] [&::-webkit-slider-thumb]:size-4 [&::-webkit-slider-thumb]:appearance-none [&::-webkit-slider-thumb]:rounded-full [&::-webkit-slider-thumb]:border [&::-webkit-slider-thumb]:border-[#6f7682] [&::-webkit-slider-thumb]:bg-[#f0f1f3]"
        />
        <button aria-label="放大" className="ml-1.5">
          <Svg w={12} h={12}>
            <path d="M0 6h12M6 0v12" strokeWidth="2.500" />
          </Svg>
        </button>
        <button aria-label="全屏显示" className="ml-4">
          <Svg w={18} h={18}>
            <path d="M1 6V1h5M1 1l5 5M12 1h5v5M17 1l-5 5M1 12v5h5M1 17l5-5M17 12v5h-5M17 17l-5-5" strokeWidth="1.800" />
          </Svg>
        </button>
      </div>
      <span className="pointer-events-none absolute top-1 right-4 text-[19px] whitespace-nowrap text-[#989ba1] [text-shadow:1px_1px_0_#fff]">CSDN @清风微凉 aaa</span>
    </footer>
  );
}

/* ---------- callouts over the window ---------- */

function Callouts() {
  return (
    <div className="pointer-events-none absolute top-0 left-0 text-[34px] leading-none text-[#fb1d12]">
      <svg width="600" height="200" viewBox="0 0 600 200" fill="#ff2012" aria-hidden="true">
        <path d="M494 35l17-2-.5 5L567 69l-62-23-1 4z" />
        <path d="M321 25h2l-14.500 43 4.500 3-14 8-2-19 5 2.500z" />
        <path d="M463 154l18-4-1 4 48 20-50.500-11.500L476 168z" />
      </svg>
      <span className="absolute top-[73px] left-[324px]">2</span>
      <span className="absolute top-[81px] left-[583px]">1</span>
      <span className="absolute top-[173px] left-[544px]">3</span>
    </div>
  );
}

export default function App() {
  return (
    <div className="relative flex h-screen flex-col overflow-hidden bg-[#f5f7f9] font-['Noto_Sans','Noto_Sans_CJK_SC',sans-serif] text-[15px] leading-5 text-[#272e42]">
      <TitleBar />
      <Ribbon />
      <FormulaBar />
      <Sheet />
      <SheetTabs />
      <StatusBar />
      <BorderMenu />
      <Callouts />
    </div>
  );
}
